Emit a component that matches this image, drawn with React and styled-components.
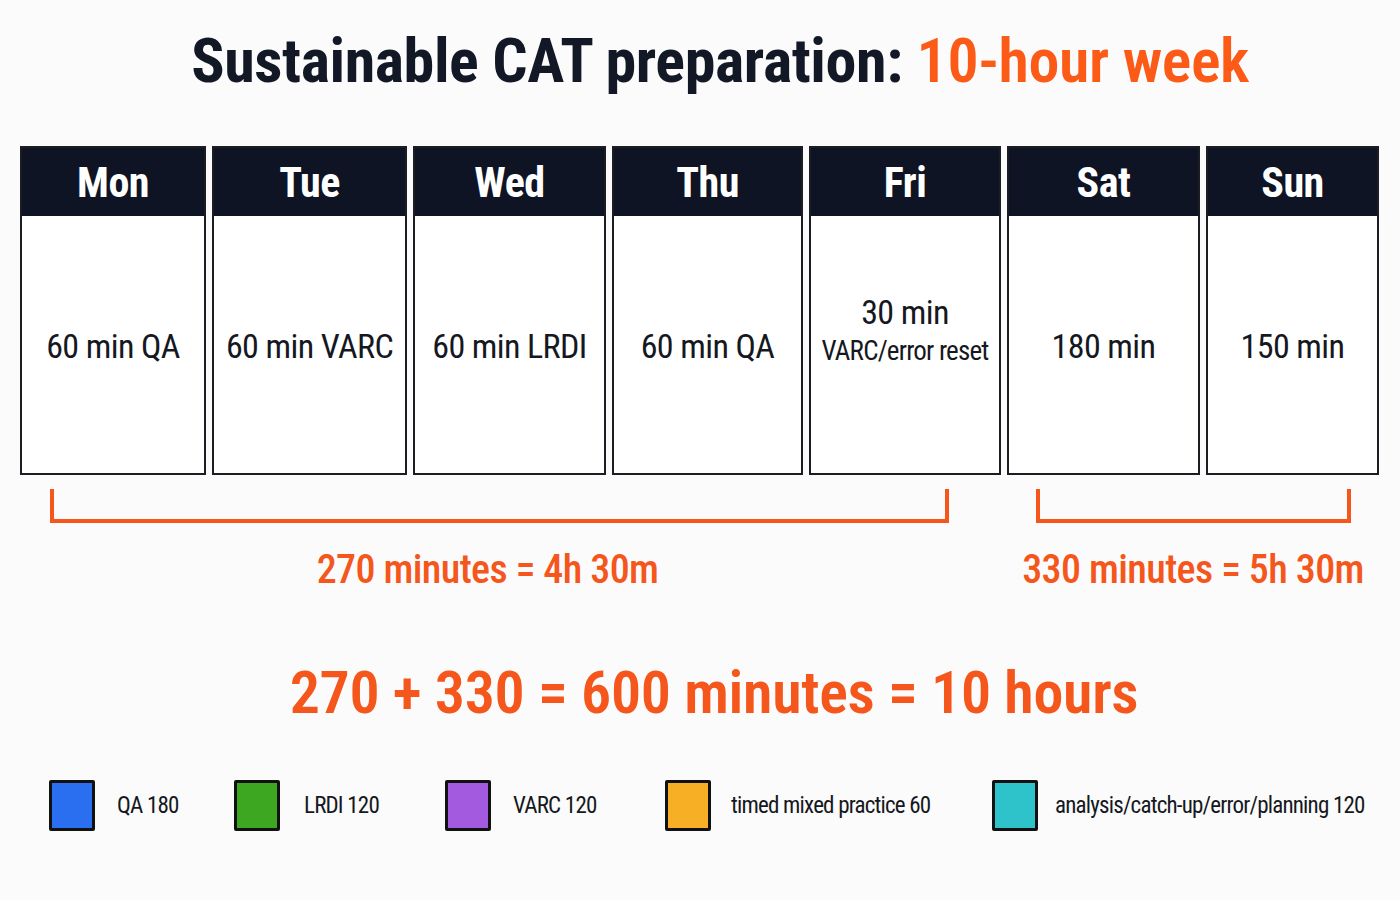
import React from 'react';
import styled, { createGlobalStyle } from 'styled-components';

const GlobalStyle = createGlobalStyle`
  body {
    margin: 0;
    background: #fbfbfb;
    font-family: "Roboto Condensed", "Liberation Sans", sans-serif;
    color: #111522;
  }
`;

const Page = styled.div`
  width: 1400px;
  height: 900px;
  box-sizing: border-box;
  padding: 24px 20px 0 20px;
  display: flex;
  flex-direction: column;
`;

const Title = styled.h1`
  margin: 0;
  height: 96px;
  font-size: 62px;
  font-weight: 700;
  text-align: center;
  line-height: 74px;
  letter-spacing: -0.4px;
  color: #131826;
  padding-left: 40px;
  white-space: nowrap;
`;

const Accent = styled.span`
  color: #fb5a17;
  font-weight: 600;
`;

const Week = styled.div`
  margin-top: 26px;
  display: grid;
  grid-template-columns: 186px 195px 193px 191px 192px 193px 173px;
  column-gap: 6px;
`;

const Day = styled.div`
  height: 329px;
  border: 2px solid #1b1d22;
  box-sizing: border-box;
  display: flex;
  flex-direction: column;
  background: #fff;
`;

const DayHead = styled.div`
  height: 68px;
  background: #0f1424;
  color: #fff;
  font-size: 42px;
  font-weight: 700;
  display: flex;
  align-items: center;
  justify-content: center;
  letter-spacing: -0.5px;
`;

const DayBody = styled.div`
  flex: 1;
  display: flex;
  flex-direction: column;
  align-items: center;
  justify-content: center;
  text-align: center;
  font-size: 34px;
  line-height: 39px;
  letter-spacing: -0.6px;
  padding-top: ${(p) => (p.$lift ? 0 : 4)}px;
  padding-bottom: ${(p) => (p.$lift ? 26 : 0)}px;
  color: #151821;
  white-space: nowrap;
`;

const Small = styled.span`
  font-size: 27px;
  letter-spacing: -0.8px;
`;

const Totals = styled.div`
  margin-top: 14px;
  display: grid;
  grid-template-columns: 186px 195px 193px 191px 192px 193px 173px;
  column-gap: 6px;
`;

const Group = styled.div`
  grid-column: ${(p) => p.$cols};
  display: flex;
  flex-direction: column;
`;

const Bracket = styled.div`
  height: 30px;
  margin: 0 ${(p) => p.$right}px 0 ${(p) => p.$left}px;
  border: 4px solid #f4561c;
  border-top: none;
`;

const Sum = styled.div`
  margin-top: 23px;
  text-align: center;
  font-size: 40px;
  font-weight: 500;
  letter-spacing: -0.6px;
  color: #f4561c;
  white-space: nowrap;
  padding-right: ${(p) => p.$shift || 0}px;
`;

const Grand = styled.div`
  margin-top: 64px;
  text-align: center;
  font-size: 60px;
  font-weight: 600;
  letter-spacing: -0.3px;
  color: #f4561c;
  padding-left: 28px;
  white-space: nowrap;
`;

const Legend = styled.div`
  margin-top: 52px;
  display: flex;
  align-items: center;
  padding-left: 29px;
`;

const Item = styled.div`
  display: flex;
  align-items: center;
  gap: ${(p) => p.$gap}px;
  width: ${(p) => (p.$width ? `${p.$width}px` : 'auto')};
  flex-shrink: 0;
`;

const Swatch = styled.span`
  width: 46px;
  height: 51px;
  box-sizing: border-box;
  border: 3px solid #111;
  border-radius: 2px;
  background: ${(p) => p.$color};
`;

const LegendText = styled.span`
  font-size: 23px;
  letter-spacing: -0.8px;
  color: #151821;
  white-space: nowrap;
`;

const days = [
  { name: 'Mon', body: '60 min QA' },
  { name: 'Tue', body: '60 min VARC' },
  { name: 'Wed', body: '60 min LRDI' },
  { name: 'Thu', body: '60 min QA' },
  { name: 'Fri', body: null },
  { name: 'Sat', body: '180 min' },
  { name: 'Sun', body: '150 min' },
];

const legend = [
  { color: '#2a6ff0', label: 'QA 180', width: 185, gap: 22 },
  { color: '#3ea722', label: 'LRDI 120', width: 211, gap: 24 },
  { color: '#a35ade', label: 'VARC 120', width: 220, gap: 22 },
  { color: '#f7b025', label: 'timed mixed practice 60', width: 327, gap: 20 },
  { color: '#2ec3cb', label: 'analysis/catch-up/error/planning 120', width: 0, gap: 17 },
];

const App = () => {
  return (
    <>
      <GlobalStyle />
      <Page>
        <Title>
          Sustainable CAT preparation: <Accent>10-hour week</Accent>
        </Title>

        <Week>
          {days.map((d) => (
            <Day key={d.name}>
              <DayHead>{d.name}</DayHead>
              {d.body ? (
                <DayBody>{d.body}</DayBody>
              ) : (
                <DayBody $lift>
                  <span>30 min</span>
                  <Small>VARC/error reset</Small>
                </DayBody>
              )}
            </Day>
          ))}
        </Week>

        <Totals>
          <Group $cols="1 / 6">
            <Bracket $left={30} $right={52} />
            <Sum $shift={46}>270 minutes = 4h 30m</Sum>
          </Group>
          <Group $cols="6 / 8">
            <Bracket $left={29} $right={28} />
            <Sum>330 minutes = 5h 30m</Sum>
          </Group>
        </Totals>

        <Grand>270 + 330 = 600 minutes = 10 hours</Grand>

        <Legend>
          {legend.map((l) => (
            <Item key={l.label} $width={l.width} $gap={l.gap}>
              <Swatch $color={l.color} />
              <LegendText>{l.label}</LegendText>
            </Item>
          ))}
        </Legend>
      </Page>
    </>
  );
};

export default App;
